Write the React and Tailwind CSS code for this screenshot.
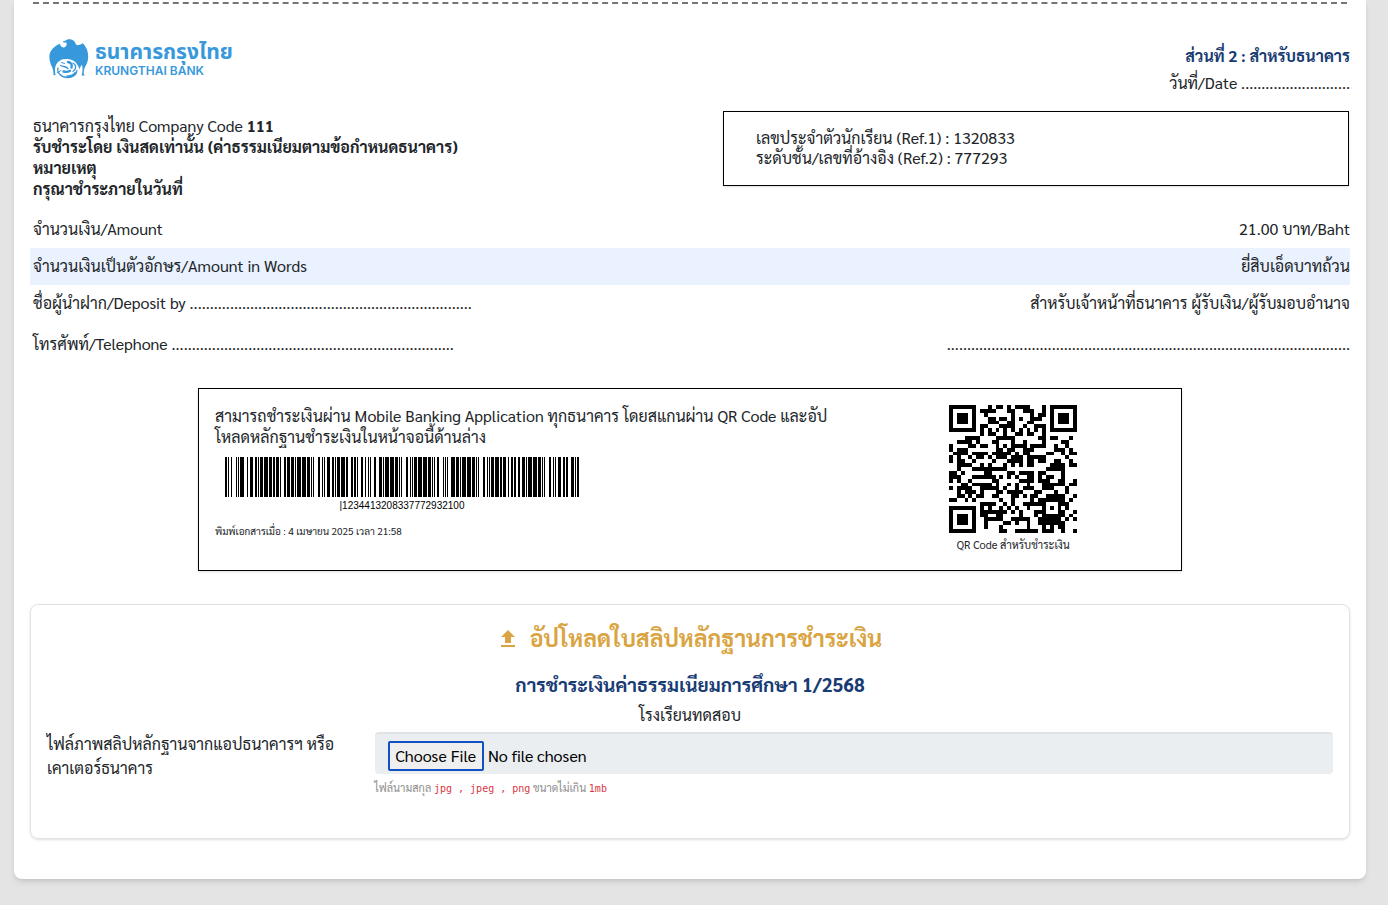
const SLIP_PAYLOAD = "|12344\r\n1320833\r\n777293\r\n2100\r\n";

/* ---------- Code 128 ---------- */

const CODE128_WIDTHS =
  "212222 222122 222221 121223 121322 131222 122213 122312 132212 221213 221312 231212 112232 122132 122231 113222 123122 123221 223211 221132 221231 213212 223112 312131 311222 321122 321221 312212 322112 322211 212123 212321 232121 111323 131123 131321 112313 132113 132311 211313 231113 231311 112133 112331 132131 113123 113321 133121 313121 211331 231131 213113 213311 213131 311123 311321 331121 312113 312311 332111 314111 221411 431111 111224 111422 121124 121421 141122 141221 112214 112412 122114 122411 142112 142211 241211 221114 413111 241112 134111 111242 121142 121241 114212 124112 124211 411212 421112 421211 212141 214121 412121 111143 111341 131141 114113 114311 411113 411311 113141 114131 311141 411131 211412 211214 211232 2331112".split(
    " "
  );

const START_B = 104;
const CODE_A = 101;
const CODE_C = 99;
const STOP = 106;

function code128Symbols(text) {
  const symbols = [START_B];
  let set = "B";
  let i = 0;
  while (i < text.length) {
    const digits = text.slice(i).match(/^\d*/)[0].length;
    if (set === "C" && digits >= 2) {
      symbols.push(Number(text.slice(i, i + 2)));
      i += 2;
    } else if (digits >= 4 && digits % 2 === 0) {
      symbols.push(CODE_C);
      set = "C";
    } else {
      const code = text.charCodeAt(i);
      if (code < 32 && set !== "A") {
        symbols.push(CODE_A);
        set = "A";
      }
      symbols.push(code < 32 ? code + 64 : code - 32);
      i += 1;
    }
  }
  const sum = symbols.reduce((acc, s, k) => acc + s * Math.max(k, 1), 0);
  return [...symbols, sum % 103, STOP];
}

function code128Bars(text) {
  const bars = [];
  let x = 0;
  code128Symbols(text).forEach((s) => {
    [...CODE128_WIDTHS[s]].forEach((w, k) => {
      if (k % 2 === 0) bars.push({ x, w: Number(w) });
      x += Number(w);
    });
  });
  return { bars, width: x };
}

/* ---------- QR code, version 4, level H, mask 4 ---------- */

const QR_SIZE = 33;
const QR_LEVEL = { bits: 2, blocks: 4, data: 9, ecc: 16 };
const QR_MASK = 4;

const EXP = [];
const LOG = [];
for (let i = 0, v = 1; i < 255; i++) {
  EXP[i] = v;
  LOG[v] = i;
  v = v << 1;
  if (v > 255) v ^= 0x11d;
}
const mul = (a, b) => (a && b ? EXP[(LOG[a] + LOG[b]) % 255] : 0);

function eccBytes(data, count) {
  let gen = [1];
  for (let i = 0; i < count; i++) {
    const next = new Array(gen.length + 1).fill(0);
    gen.forEach((c, j) => {
      next[j] ^= c;
      next[j + 1] ^= mul(c, EXP[i]);
    });
    gen = next;
  }
  const rem = [...data, ...new Array(count).fill(0)];
  for (let i = 0; i < data.length; i++) {
    const f = rem[i];
    gen.forEach((c, j) => {
      rem[i + j] ^= mul(c, f);
    });
  }
  return rem.slice(data.length);
}

function qrCodewords(text) {
  const { blocks, data, ecc } = QR_LEVEL;
  const total = blocks * data;
  let bits = "0100" + text.length.toString(2).padStart(8, "0");
  for (const ch of text) bits += ch.charCodeAt(0).toString(2).padStart(8, "0");
  bits += "0000";
  const bytes = bits.match(/.{8}/g).map((b) => parseInt(b, 2));
  for (let pad = 0xec; bytes.length < total; pad ^= 0xec ^ 0x11) bytes.push(pad);
  const groups = Array.from({ length: blocks }, (_, i) => bytes.slice(i * data, (i + 1) * data));
  const eccs = groups.map((g) => eccBytes(g, ecc));
  const out = [];
  for (let i = 0; i < data; i++) groups.forEach((g) => out.push(g[i]));
  for (let i = 0; i < ecc; i++) eccs.forEach((g) => out.push(g[i]));
  return out;
}

const isMasked = (r, c) => (Math.floor(r / 2) + Math.floor(c / 3)) % 2 === 0;

function qrMatrix(text) {
  const codewords = qrCodewords(text);
  const n = QR_SIZE;
  const m = Array.from({ length: n }, () => new Array(n).fill(null));
  const square = (cr, cc, radius, isDark) => {
    for (let r = -radius; r <= radius; r++)
      for (let c = -radius; c <= radius; c++)
        if (m[cr + r] && cc + c >= 0 && cc + c < n)
          m[cr + r][cc + c] = isDark(Math.max(Math.abs(r), Math.abs(c)));
  };
  for (let i = 0; i < n; i++) {
    m[6][i] = i % 2 === 0;
    m[i][6] = i % 2 === 0;
  }
  [[3, 3], [3, n - 4], [n - 4, 3]].forEach(([r, c]) => square(r, c, 4, (d) => d !== 2 && d !== 4));
  square(26, 26, 2, (d) => d !== 1);

  const info = (QR_LEVEL.bits << 3) | QR_MASK;
  let rem = info;
  for (let i = 0; i < 10; i++) rem = (rem << 1) ^ ((rem >> 9) * 0x537);
  const format = ((info << 10) | rem) ^ 0x5412;
  const bit = (i) => ((format >> i) & 1) === 1;
  for (let i = 0; i <= 5; i++) m[i][8] = bit(i);
  m[7][8] = bit(6);
  m[8][8] = bit(7);
  m[8][7] = bit(8);
  for (let i = 9; i < 15; i++) m[8][14 - i] = bit(i);
  for (let i = 0; i < 8; i++) m[8][n - 1 - i] = bit(i);
  for (let i = 8; i < 15; i++) m[n - 15 + i][8] = bit(i);
  m[n - 8][8] = true;

  let k = 0;
  for (let right = n - 1; right >= 1; right -= 2) {
    if (right === 6) right = 5;
    const upward = ((right + 1) & 2) === 0;
    for (let v = 0; v < n; v++) {
      const r = upward ? n - 1 - v : v;
      for (let j = 0; j < 2; j++) {
        const c = right - j;
        if (m[r][c] !== null) continue;
        const dark = k < codewords.length * 8 && ((codewords[k >> 3] >> (7 - (k & 7))) & 1) === 1;
        m[r][c] = dark !== isMasked(r, c);
        k += 1;
      }
    }
  }
  return m;
}

function Barcode({ value }) {
  const { bars, width } = code128Bars(value);
  return (
    <svg width={width} height="40" viewBox={`0 0 ${width} 40`} shapeRendering="crispEdges" role="img" aria-label="Barcode">
      {bars.map((b) => (
        <rect key={b.x} x={b.x} y="0" width={b.w} height="40" />
      ))}
    </svg>
  );
}

function QrCode({ value }) {
  const d = qrMatrix(value)
    .flatMap((row, r) => row.map((on, c) => (on ? `M${c} ${r}h1v1h-1z` : "")))
    .join("");
  return (
    <svg className="size-32" viewBox={`0 0 ${QR_SIZE} ${QR_SIZE}`} shapeRendering="crispEdges" role="img" aria-label="QR Code">
      <path d={d} />
    </svg>
  );
}

/* ---------- Page ---------- */

function BankLogo() {
  return (
    <div className="flex items-center gap-1.5 text-[#3798dc]">
      <svg width="40" height="40" viewBox="0 0 40 40" role="img" aria-label="Krungthai Bank">
        <path
          fill="currentColor"
          d="M14.200 2.200L16.800 1.600C18.500 0 22.500-.2 25 2C26.300 3.500 26.500 5 27.800 6.300C30 6.300 32 5.500 34 4.300C37.300 8 39.200 12.500 39.200 17.500C39.200 21.500 38 24.500 36.300 27.500C35 30 34.600 32.500 34.800 35L35.800 36.500L32.600 36.600C33.600 33.500 33.900 29.500 33 25.500C32 27 31 28.500 30.500 30.500C29.500 27 27.500 23.500 24.500 21.800C21 19.800 15 19.200 11 21.500C7.500 23.500 6 27 6 30.500C6 33 6.300 34.500 6.600 36.300L4.300 36C4.800 33 4.200 31 3 28C1.200 24 .2 21 .4 17C.8 11.500 5 7.500 10.800 4.800C11.300 6.800 12.800 8.600 15 8.600C17.200 7.800 18.200 5.800 17.400 3.600L14.200 3.400Z"
        />
        <g fill="none" stroke="currentColor" strokeLinecap="round">
          <path strokeWidth="1.300" d="M9 29c-1.500 4.500 3.500 9.500 9.500 9.500 5 0 9-2.500 9.500-7M11.500 26.500c2.500 1.500 5 .5 7.500 3M24 24c3.500 2 3.500 6.500 0 8.500" />
          <path strokeWidth="2.400" d="M19 23c3 .5 4.500 2.500 3.500 5.500M14.500 32.500c2.500 .8 4.500 .5 6.500-.8M18.500 37.500c3.500 .2 6-1 8-3.500" />
          <path strokeWidth="1" d="M12.500 23.500l3 1M8.500 33.500l3.500-2" />
        </g>
      </svg>
      <div className="flex flex-col">
        <span className="font-['Noto_Sans_Thai',sans-serif] text-[21px] font-bold leading-6">ธนาคารกรุงไทย</span>
        <span className="font-['Inter',sans-serif] text-xs font-semibold leading-3">KRUNGTHAI BANK</span>
      </div>
    </div>
  );
}

function Row({ label, value, className = "pb-[9px] pt-[7px]" }) {
  return (
    <div className={`flex items-center justify-between pl-[3px] leading-[21px] ${className}`}>
      <span>{label}</span>
      <span>{value}</span>
    </div>
  );
}

export default function App() {
  return (
    <div className="min-h-screen bg-[#e4e4e4] pb-[25px] pl-3.5 pr-[22px] font-['Sarabun',sans-serif] text-base text-[#212529]">
      <main className="rounded-b-lg bg-white px-4 pb-10 pt-0.5 shadow-md">
        <div className="mx-[3px] border-t-2 border-dashed border-[#757575]" />

        <header className="flex items-start justify-between pt-[35px]">
          <div className="pl-[19px]">
            <BankLogo />
          </div>
          <div className="pb-px pt-[3px] text-right leading-[27px]">
            <h2 className="font-bold text-[#173b72]">ส่วนที่ 2 : สำหรับธนาคาร</h2>
            <p>วันที่/Date ...........................</p>
          </div>
        </header>

        <section className="grid grid-cols-[693px_1fr] items-start pt-3.5">
          <div className="pb-px pl-[3px] pt-1 leading-[21px]">
            <p>
              ธนาคารกรุงไทย Company Code <b>111</b>
            </p>
            <p className="font-bold">รับชำระโดย เงินสดเท่านั้น (ค่าธรรมเนียมตามข้อกำหนดธนาคาร)</p>
            <p className="font-bold">หมายเหตุ</p>
            <p className="font-bold">กรุณาชำระภายในวันที่</p>
          </div>
          <div className="mr-px border border-black px-8 pb-[17px] pt-4 leading-5 shadow-sm">
            <p>เลขประจำตัวนักเรียน (Ref.1) : 1320833</p>
            <p>ระดับชั้น/เลขที่อ้างอิง (Ref.2) : 777293</p>
          </div>
        </section>

        <section className="pt-[11px]">
          <Row label="จำนวนเงิน/Amount" value="21.00 บาท/Baht" />
          <Row className="bg-[#eaf2ff] pb-[9px] pt-[7px]" label="จำนวนเงินเป็นตัวอักษร/Amount in Words" value="ยี่สิบเอ็ดบาทถ้วน" />
          <Row
            label="ชื่อผู้นำฝาก/Deposit by ......................................................................"
            value="สำหรับเจ้าหน้าที่ธนาคาร ผู้รับเงิน/ผู้รับมอบอำนาจ"
          />
          <Row
            className="pb-[13px] pt-[11px]"
            label="โทรศัพท์/Telephone ......................................................................"
            value="...................................................................................................."
          />
        </section>

        <section className="mx-[168px] mt-[21px] grid grid-cols-[minmax(0,2fr)_minmax(0,1fr)] gap-10 border border-black px-4 pb-[17px] pt-4 shadow-sm">
          <div>
            <p className="whitespace-nowrap pb-px leading-[21px]">
              สามารถชำระเงินผ่าน Mobile Banking Application ทุกธนาคาร โดยสแกนผ่าน QR Code และอัป
              <br />
              โหลดหลักฐานชำระเงินในหน้าจอนี้ด้านล่าง
            </p>
            <div className="ml-2.5 mt-[9px] flex w-fit flex-col items-center">
              <Barcode value={SLIP_PAYLOAD} />
              <span className="font-['Liberation_Sans',sans-serif] text-[10px] leading-[18px] text-black">|1234413208337772932100</span>
            </div>
            <p className="pt-2.5 text-[10px] leading-3">พิมพ์เอกสารเมื่อ : 4 เมษายน 2025 เวลา 21:58</p>
          </div>
          <div className="flex flex-col items-center">
            <QrCode value={SLIP_PAYLOAD} />
            <span className="pt-1 text-[11px] leading-4">QR Code สำหรับชำระเงิน</span>
          </div>
        </section>

        <form className="mt-[33px] rounded-lg border border-[#dee2e6] px-4 pb-[41px] pt-4 shadow-sm">
          <h1 className="flex items-center justify-center gap-3 text-[23px] font-bold leading-8 text-[#d9a441]">
            <svg width="20" height="20" viewBox="2 0 20 20" fill="currentColor" aria-hidden="true">
              <path d="M5 20h14v-2H5zm0-10h4v6h6v-6h4l-7-7z" />
            </svg>
            อัปโหลดใบสลิปหลักฐานการชำระเงิน
          </h1>
          <h2 className="pt-[15px] text-center text-[19px] font-bold leading-8 text-[#173b72]">การชำระเงินค่าธรรมเนียมการศึกษา 1/2568</h2>
          <p className="text-center leading-[30px]">โรงเรียนทดสอบ</p>
          <div className="grid grid-cols-[minmax(0,1fr)_minmax(0,3fr)] gap-2 pt-0.5">
            <label htmlFor="slip" className="leading-6">
              ไฟล์ภาพสลิปหลักฐานจากแอปธนาคารฯ หรือ
              <br />
              เคาเตอร์ธนาคาร
            </label>
            <div>
              <input
                id="slip"
                type="file"
                className="block h-[42px] w-full rounded border-t-2 border-[#e0e3e5] bg-[#eaeef1] pl-[13px] pt-[7px] leading-6 text-black file:mr-1 file:h-[30px] file:rounded-xs file:border-2 file:border-solid file:border-[#1250c4] file:bg-[#efefef] file:px-1.5"
              />
              <p className="pt-1.5 text-[11px] leading-4 text-[#8f8f8f]">
                ไฟล์นามสกุล <code className="font-['DejaVu_Sans_Mono',monospace] text-[10px] text-[#dc3545]">jpg , jpeg , png</code> ขนาดไม่เกิน{" "}
                <code className="font-['DejaVu_Sans_Mono',monospace] text-[10px] text-[#dc3545]">1mb</code>
              </p>
            </div>
          </div>
        </form>
      </main>
    </div>
  );
}
